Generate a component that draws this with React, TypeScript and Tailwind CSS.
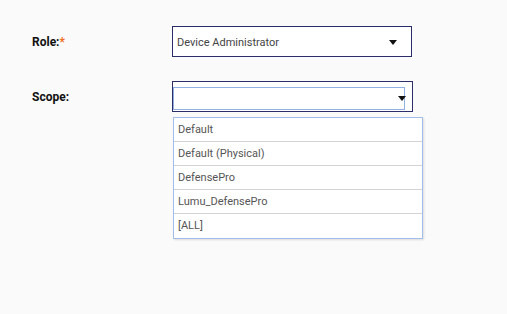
const scopes = ["Default", "Default (Physical)", "DefensePro", "Lumu_DefensePro", "[ALL]"];

function Caret() {
  return (
    <svg width="8" height="5" viewBox="0 0 8 5" className="shrink-0">
      <path d="M0 0h8L4 5z" fill="#111" />
    </svg>
  );
}

export default function App() {
  return (
    <div className="w-full h-[314px] bg-[#fafafa] pt-[26px] pl-[32px] font-['Roboto',sans-serif]">
      <div className="flex items-center h-[31px]">
        <div className="w-[140px] pt-[1px] text-[12px] font-bold text-[#111]">
          Role:<span className="text-[#f26b21]">*</span>
        </div>
        <div className="w-[240px] h-[31px] border border-[#2c2e6b] bg-white flex items-center pl-[4px] pr-[14px]">
          <span className="flex-1 pt-[3px] text-[11px] text-[#444]">Device Administrator</span>
          <div className="pt-[2px]">
            <Caret />
          </div>
        </div>
      </div>

      <div className="flex items-center h-[31px] mt-[24px]">
        <div className="w-[140px] pt-[1px] text-[12px] font-bold text-[#111]">Scope:</div>
        <div className="relative w-[241px] h-[31px] border border-[#2c2e6b] bg-white">
          <div className="absolute left-0 top-[5px] w-[232px] h-[23px] border border-[#8fb0e0] bg-white" />
          <div className="absolute left-[225px] top-[14px]">
            <Caret />
          </div>
          <div className="absolute left-0 top-[35px] w-[250px] bg-white border border-[#a3bdea] shadow-[1px_1px_2px_rgba(0,0,0,0.12)]">
            {scopes.map((s, i) => (
              <div
                key={s}
                className={
                  "h-[24px] flex items-center pl-[4px] pt-[1px] text-[11px] text-[#555] " +
                  (i < scopes.length - 1 ? "border-b border-[#d4d4d4]" : "")
                }
              >
                {s}
              </div>
            ))}
          </div>
        </div>
      </div>
    </div>
  );
}
